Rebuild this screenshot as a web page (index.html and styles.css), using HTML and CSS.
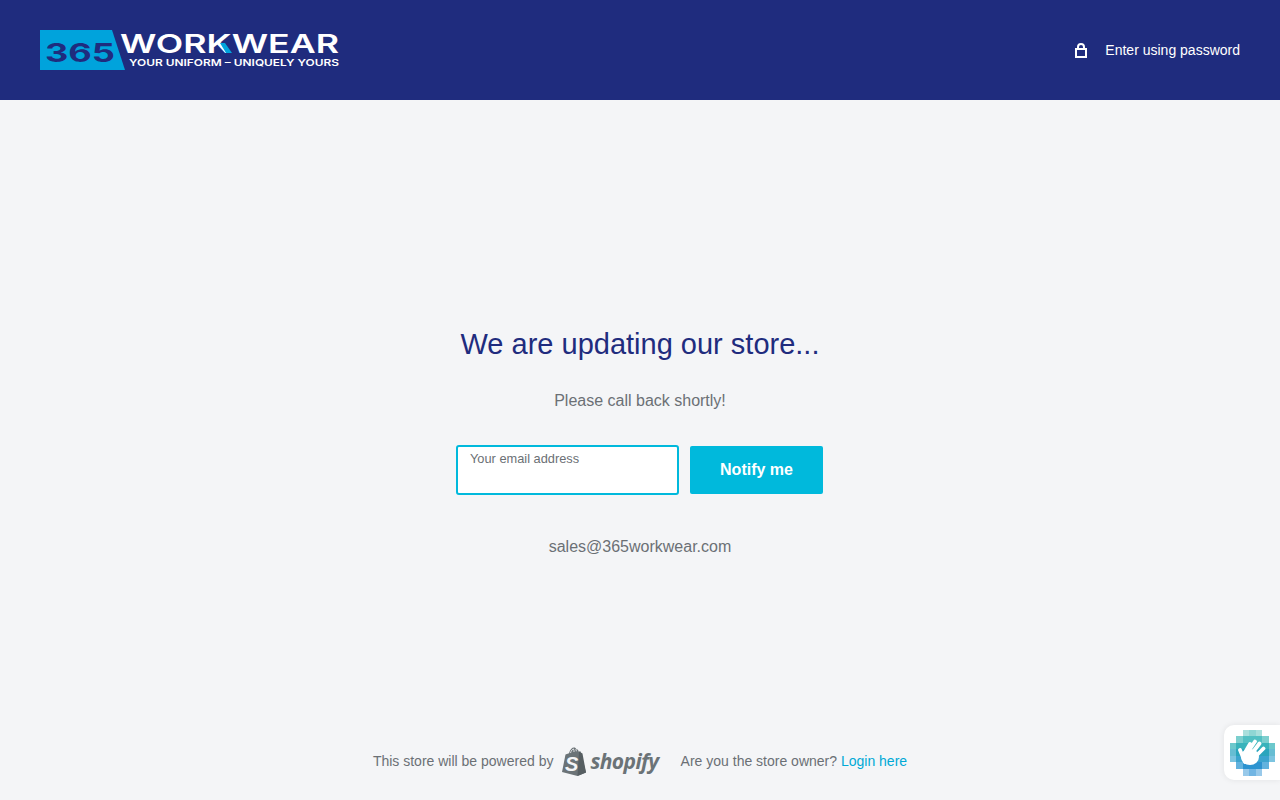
FILE: index.html
```html
<!DOCTYPE html>
<html lang="en">
<head>
    <meta charset="UTF-8">
    <meta name="viewport" content="width=device-width, initial-scale=1.0">
    <title>365 Workwear</title>
    <link rel="stylesheet" href="styles.css">
</head>
<body>
    <header class="site-header">
        <a href="#" class="logo" aria-label="365 Workwear">
            <svg width="300" height="40" viewBox="0 0 300 40">
                <polygon points="0,0 72,0 85,40 0,40" fill="#00a3dc"/>
                <text x="5" y="32" textLength="70" lengthAdjust="spacingAndGlyphs" class="logo-num">365</text>
                <text x="80" y="23" textLength="219" lengthAdjust="spacingAndGlyphs" class="logo-word">WORKWEAR</text>
                <polygon points="180,13 185,13 192,23 186,23" fill="#00a3dc"/>
                <text x="89" y="36" textLength="210" lengthAdjust="spacingAndGlyphs" class="logo-tag">YOUR UNIFORM – UNIQUELY YOURS</text>
            </svg>
        </a>
        <a href="#" class="password-link">
            <svg class="lock-icon" width="12" height="15" viewBox="0 0 12 15">
                <path d="M3 6V4a3 3 0 0 1 6 0v2" fill="none" stroke="#fff" stroke-width="2"/>
                <rect x="1" y="6" width="10" height="8" fill="none" stroke="#fff" stroke-width="2"/>
            </svg>
            <span>Enter using password</span>
        </a>
    </header>

    <main class="content">
        <h1>We are updating our store...</h1>
        <p class="message">Please call back shortly!</p>
        <form class="notify-form">
            <div class="input-group">
                <label for="email">Your email address</label>
                <input type="email" id="email">
            </div>
            <button type="button" class="notify-button">Notify me</button>
        </form>
        <p class="contact">sales@365workwear.com</p>
    </main>

    <footer class="site-footer">
        <span>This store will be powered by</span>
        <span class="shopify">
            <svg width="25" height="29" viewBox="0 0 25 29">
                <path d="M1 25 4.500 7.500 8 6.300C9 2.500 11 .5 13 .5c1.200 0 1.900 .6 2.300 1.500 1.200 0 2 1 2.500 2.700l1.700-.5L25 25.500 16.500 29Z" fill="#6b7377"/>
                <path d="M18 4.500 16.500 29 25 25.500 21.500 6.500Z" fill="#565e62"/>
                <path d="M9.500 6c.7-2.600 2-4 3.300-4M13 5c0-1.200 0-2.200-.5-3M15.300 4.300c0-1-.2-1.700-.5-2.300" fill="none" stroke="#f4f5f7" stroke-width=".8"/>
                <text x="4" y="24" class="shopify-s">S</text>
            </svg>
            <span class="shopify-word">shopify</span>
        </span>
        <span class="owner">Are you the store owner? <a href="#">Login here</a></span>
    </footer>

    <button type="button" class="access-widget" aria-label="Accessibility">
        <svg width="45" height="46" viewBox="0 0 45 46">
            <rect x="13" y="0" width="19" height="6" fill="#a9dfdc"/>
            <rect x="19" y="0" width="7" height="6" fill="#8fd6d4"/>
            <rect x="6" y="6" width="33" height="7" fill="#7ccfce"/>
            <rect x="13" y="6" width="19" height="7" fill="#52c0c3"/>
            <rect x="0" y="13" width="45" height="6" fill="#6cc8cc"/>
            <rect x="6" y="13" width="33" height="6" fill="#38b3bb"/>
            <rect x="0" y="19" width="45" height="7" fill="#66bdd3"/>
            <rect x="6" y="19" width="33" height="7" fill="#2aa5bd"/>
            <rect x="0" y="26" width="45" height="6" fill="#7cc4e0"/>
            <rect x="6" y="26" width="33" height="6" fill="#3ba4cf"/>
            <rect x="6" y="32" width="33" height="7" fill="#62b2de"/>
            <rect x="13" y="32" width="19" height="7" fill="#2c93d0"/>
            <rect x="13" y="39" width="19" height="7" fill="#98c9ea"/>
            <rect x="19" y="39" width="7" height="7" fill="#71b5e3"/>
            <ellipse cx="20" cy="27" rx="9" ry="8" fill="#fff"/>
            <path d="M13 26 20 14M16 25 25 11.500M20 26 29.500 13.500M23 29 33.500 18.500M15 32 10 20" fill="none" stroke="#fff" stroke-width="3.800" stroke-linecap="round"/>
        </svg>
    </button>
</body>
</html>
```

FILE: styles.css
```css
* {
    box-sizing: border-box;
}

body {
    font-family: "Liberation Sans", Arial, sans-serif;
    margin: 0;
    padding: 0;
    background-color: #f4f5f7;
    color: #6b7075;
    height: 100vh;
    display: flex;
    flex-direction: column;
    overflow: hidden;
}

a {
    text-decoration: none;
}

.site-header {
    height: 100px;
    flex-shrink: 0;
    padding: 0 40px;
    background-color: #1f2c7e;
    display: flex;
    align-items: center;
    justify-content: space-between;
}

.logo {
    display: block;
    height: 40px;
}

.logo svg {
    display: block;
    overflow: visible;
}

.logo-num {
    font-family: Inter, sans-serif;
    font-weight: 700;
    font-size: 26px;
    fill: #1f2c7e;
}

.logo-word {
    font-family: Inter, sans-serif;
    font-weight: 600;
    font-size: 26px;
    fill: #fff;
}

.logo-tag {
    font-family: Inter, sans-serif;
    font-weight: 600;
    font-size: 9.6px;
    fill: #fff;
}

.password-link {
    color: #fff;
    font-size: 14px;
    display: flex;
    align-items: center;
    gap: 18px;
}

.lock-icon {
    display: block;
}

.content {
    flex: 1;
    display: flex;
    flex-direction: column;
    align-items: center;
    padding-top: 224px;
}

h1 {
    margin: 0 0 27px;
    color: #1f2c7e;
    font-size: 29px;
    font-weight: normal;
    line-height: 40px;
}

.message {
    margin: 0 0 34px;
    font-size: 16px;
    line-height: 20px;
}

.notify-form {
    display: flex;
    align-items: center;
    gap: 11px;
    margin: 0 0 42px -1px;
}

.input-group {
    position: relative;
}

.input-group label {
    position: absolute;
    left: 14px;
    top: 6px;
    font-size: 12.8px;
    line-height: 16px;
    color: #6b7075;
}

.input-group input {
    display: block;
    width: 223px;
    height: 50px;
    border: 2px solid #00b9dc;
    border-radius: 3px;
    background-color: #fff;
    outline: none;
}

.notify-button {
    width: 133px;
    height: 48px;
    border: none;
    border-radius: 2px;
    background-color: #00b9dc;
    color: #fff;
    font-family: "Liberation Sans", Arial, sans-serif;
    font-size: 16px;
    font-weight: bold;
    cursor: pointer;
}

.contact {
    margin: 0;
    font-size: 16px;
    line-height: 20px;
}

.site-footer {
    height: 78px;
    flex-shrink: 0;
    display: flex;
    align-items: center;
    justify-content: center;
    font-size: 14px;
}

.shopify {
    display: flex;
    align-items: center;
    gap: 4px;
    margin-left: 8px;
}

.shopify svg {
    display: block;
}

.shopify-s {
    font-family: "Liberation Sans", sans-serif;
    font-weight: bold;
    font-style: italic;
    font-size: 20px;
    fill: #f4f5f7;
}

.shopify-word {
    font-family: "Open Sans", sans-serif;
    font-size: 21px;
    font-weight: bold;
    font-style: italic;
    letter-spacing: -0.6px;
    color: #6b7377;
}

.owner {
    margin-left: 22px;
}

.owner a {
    color: #00a9d6;
}

.access-widget {
    position: absolute;
    right: 0;
    top: 725px;
    width: 56px;
    height: 55px;
    padding: 5px 0 0 6px;
    border: none;
    border-radius: 10px 0 0 10px;
    background-color: #fff;
    box-shadow: 0 0 6px rgba(0,0,0,0.08);
    display: flex;
    align-items: flex-start;
}
```
